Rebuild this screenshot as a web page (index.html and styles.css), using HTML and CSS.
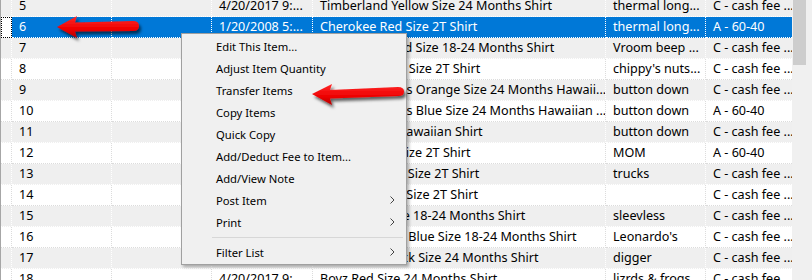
FILE: index.html
```html
<html lang="en">
<head>
    <meta charset="UTF-8">
    <title>Inventory List</title>
    <link rel="stylesheet" href="styles.css">
</head>
<body>
    <div class="window">
        <div class="list">
            <div class="rows">
                <div class="row alt"><div class="cell head"></div><div class="cell">5</div><div class="cell"></div><div class="cell">4/20/2017 9:...</div><div class="cell">Timberland Yellow Size 24 Months Shirt</div><div class="cell">thermal long...</div><div class="cell">C - cash fee ...</div></div>
                <div class="row sel"><div class="cell head"></div><div class="cell">6</div><div class="cell"></div><div class="cell">1/20/2008 5:...</div><div class="cell">Cherokee Red Size 2T Shirt</div><div class="cell">thermal long...</div><div class="cell">A - 60-40</div></div>
                <div class="row alt"><div class="cell head"></div><div class="cell">7</div><div class="cell"></div><div class="cell">4/20/2017 9:...</div><div class="cell">Health-tex Gold Size 18-24 Months Shirt</div><div class="cell">Vroom beep ...</div><div class="cell">C - cash fee ...</div></div>
                <div class="row"><div class="cell head"></div><div class="cell">8</div><div class="cell"></div><div class="cell">4/20/2017 9:...</div><div class="cell">Carter's Green Size 2T Shirt</div><div class="cell">chippy's nuts...</div><div class="cell">C - cash fee ...</div></div>
                <div class="row alt"><div class="cell head"></div><div class="cell">9</div><div class="cell"></div><div class="cell">4/20/2017 9:...</div><div class="cell">Old Navy Palms Orange Size 24 Months Hawaii...</div><div class="cell">button down</div><div class="cell">C - cash fee ...</div></div>
                <div class="row"><div class="cell head"></div><div class="cell">10</div><div class="cell"></div><div class="cell">4/20/2017 9:...</div><div class="cell">Old Navy Palms Blue Size 24 Months Hawaiian ...</div><div class="cell">button down</div><div class="cell">A - 60-40</div></div>
                <div class="row alt"><div class="cell head"></div><div class="cell">11</div><div class="cell"></div><div class="cell">4/20/2017 9:...</div><div class="cell">Janie &amp; Jacks Hawaiian Shirt</div><div class="cell">button down</div><div class="cell">C - cash fee ...</div></div>
                <div class="row"><div class="cell head"></div><div class="cell">12</div><div class="cell"></div><div class="cell">4/20/2017 9:...</div><div class="cell">Carter's Blue Size 2T Shirt</div><div class="cell">MOM</div><div class="cell">A - 60-40</div></div>
                <div class="row alt"><div class="cell head"></div><div class="cell">13</div><div class="cell"></div><div class="cell">4/20/2017 9:...</div><div class="cell">Old Navy Gray Size 2T Shirt</div><div class="cell">trucks</div><div class="cell">C - cash fee ...</div></div>
                <div class="row"><div class="cell head"></div><div class="cell">14</div><div class="cell"></div><div class="cell">4/20/2017 9:...</div><div class="cell">Healthtex Red Size 2T Shirt</div><div class="cell"></div><div class="cell">C - cash fee ...</div></div>
                <div class="row alt"><div class="cell head"></div><div class="cell">15</div><div class="cell"></div><div class="cell">4/20/2017 9:...</div><div class="cell">Gap Green Size 18-24 Months Shirt</div><div class="cell">sleevless</div><div class="cell">C - cash fee ...</div></div>
                <div class="row"><div class="cell head"></div><div class="cell">16</div><div class="cell"></div><div class="cell">4/20/2017 9:...</div><div class="cell">Ninja Turtles 2 Blue Size 18-24 Months Shirt</div><div class="cell">Leonardo's</div><div class="cell">C - cash fee ...</div></div>
                <div class="row alt"><div class="cell head"></div><div class="cell">17</div><div class="cell"></div><div class="cell">4/20/2017 9:...</div><div class="cell">CAT Dozer Black Size 24 Months Shirt</div><div class="cell">digger</div><div class="cell">C - cash fee ...</div></div>
                <div class="row"><div class="cell head"></div><div class="cell">18</div><div class="cell"></div><div class="cell">4/20/2017 9:...</div><div class="cell">Boyz Red Size 24 Months Shirt</div><div class="cell">lizrds &amp; frogs</div><div class="cell">C - cash fee ...</div></div>
            </div>
        </div>
        <div class="scrollbar"><div class="thumb"></div></div>

        <!-- right-click menu over the list -->
        <div class="menu">
            <div class="item">Edit This Item...</div>
            <div class="item">Adjust Item Quantity</div>
            <div class="item">Transfer Items</div>
            <div class="item">Copy Items</div>
            <div class="item">Quick Copy</div>
            <div class="item">Add/Deduct Fee to Item...</div>
            <div class="item">Add/View Note</div>
            <div class="item">Post Item <svg class="chev" width="5" height="8" viewBox="0 0 5 8"><path d="M0.5 0.5 L4 4 L0.5 7.5" fill="none" stroke="#444" stroke-width="1"/></svg></div>
            <div class="item">Print <svg class="chev" width="5" height="8" viewBox="0 0 5 8"><path d="M0.5 0.5 L4 4 L0.5 7.5" fill="none" stroke="#444" stroke-width="1"/></svg></div>
            <div class="sep"></div>
            <div class="item">Filter List <svg class="chev" width="5" height="8" viewBox="0 0 5 8"><path d="M0.5 0.5 L4 4 L0.5 7.5" fill="none" stroke="#444" stroke-width="1"/></svg></div>
        </div>

        <!-- red annotation arrows -->
        <svg class="arrows" width="812" height="280" viewBox="0 0 812 280">
            <defs>
                <linearGradient id="red" x1="0" y1="0" x2="0" y2="1">
                    <stop offset="0" stop-color="#ff2a2a"/>
                    <stop offset="0.6" stop-color="#ee0000"/>
                    <stop offset="1" stop-color="#b30000"/>
                </linearGradient>
                <filter id="shadow" x="-20%" y="-50%" width="140%" height="200%">
                    <feDropShadow dx="2" dy="3" stdDeviation="1.8" flood-color="#000" flood-opacity="0.6"/>
                </filter>
            </defs>
            <path d="M57 27 L77 16 L75 22.5 L133 21 Q139 21 139 26 Q139 31 133 31 L75 31.5 L77 38 Z" fill="url(#red)" filter="url(#shadow)"/>
            <path d="M312 94 L332 84 L330 90 L398 87 Q404 87 404 91.5 Q404 96 398 96 L330 98.5 L332 105 Z" fill="url(#red)" filter="url(#shadow)"/>
        </svg>
    </div>
</body>
</html>
```

FILE: styles.css
```css
body {
    margin: 0;
    background: #fff;
    font-family: "Noto Sans", sans-serif;
    color: #000;
    overflow: hidden;
}

.window {
    position: relative;
    display: flex;
    width: 812px;
    height: 280px;
}

.list {
    width: 791px;
    border-left: 1px solid #a6a6a6;
    overflow: hidden;
}

.rows {
    margin-top: -4px;
    width: 805px;
}

.row {
    display: grid;
    grid-template-columns: 11px 100px 100px 101px 293px 100px 100px;
    height: 21px;
    font-size: 12.6px;
}

.row.alt {
    background: #efefef;
}

.cell {
    box-sizing: border-box;
    border-right: 1px dotted #dcdcdc;
    border-bottom: 1px dotted #dcdcdc;
    padding-left: 7px;
    line-height: 20px;
    white-space: nowrap;
    overflow: hidden;
}

.row.alt .cell {
    border-color: #fff;
}

.cell.head {
    padding: 0;
}

.row.sel {
    background: #0078d7;
    color: #fff;
}

.row.sel .cell {
    border-color: #fff;
}

.row.sel .head {
    background: #fff;
    outline: 1px dotted #000;
    outline-offset: -1px;
}

.scrollbar {
    width: 20px;
    background: #f0f0f0;
}

.thumb {
    margin-left: 1px;
    width: 13px;
    height: 65px;
    background: #cdcdcd;
}

.menu {
    position: absolute;
    left: 181px;
    top: 33px;
    width: 226px;
    box-sizing: border-box;
    padding: 1px 0;
    background: #f0f0f0;
    border: 1px solid #a0a0a0;
    box-shadow: 2px 2px 3px rgba(0, 0, 0, 0.3);
    font-size: 11.25px;
}

.item {
    display: flex;
    justify-content: space-between;
    align-items: center;
    height: 22px;
    padding: 0 11px 0 34px;
}

.sep {
    height: 1px;
    background: #d7d7d7;
    margin: 4px 3px 3px 30px;
}

.arrows {
    position: absolute;
    left: 0;
    top: 0;
    pointer-events: none;
}
```
